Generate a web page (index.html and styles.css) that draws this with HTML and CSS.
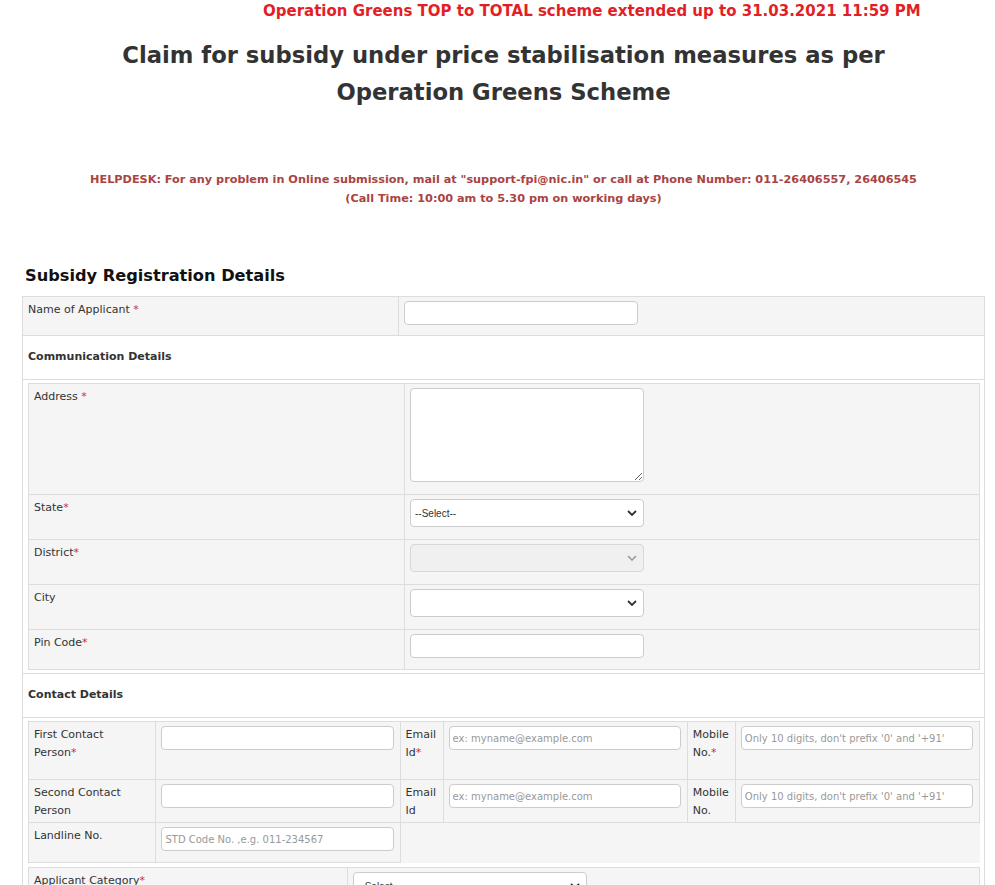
FILE: index.html
```html
<!DOCTYPE html>
<html>
<head>
<meta charset="utf-8">
<title>Claim for subsidy</title>
<link rel="stylesheet" href="styles.css">
</head>
<body>
<div class="page">
  <div class="notice">Operation Greens TOP to TOTAL scheme extended up to 31.03.2021 11:59 PM</div>
  <h1 class="title">Claim for subsidy under price stabilisation measures as per<br>Operation Greens Scheme</h1>
  <p class="helpdesk">HELPDESK: For any problem in Online submission, mail at "support-fpi@nic.in" or call at Phone Number: 011-26406557, 26406545<br>(Call Time: 10:00 am to 5.30 pm on working days)</p>
  <h2 class="section-title">Subsidy Registration Details</h2>
  <table class="outer">
    <tr class="grey">
      <td class="lbl outer-lbl">Name of Applicant <span class="req">*</span></td>
      <td class="fld"><input class="inp first" type="text"></td>
    </tr>
    <tr>
      <td colspan="2" class="subhead">Communication Details</td>
    </tr>
    <tr>
      <td colspan="2" class="nest">
        <table class="inner">
          <tr>
            <td class="lbl inner-lbl">Address <span class="req">*</span></td>
            <td class="fld"><textarea class="txt"></textarea></td>
          </tr>
          <tr>
            <td class="lbl">State<span class="req">*</span></td>
            <td class="fld">
              <span class="sel-wrap">
                <select class="sel"><option>--Select--</option></select>
                <svg class="chev" width="10" height="6" viewBox="0 0 10 6"><polyline points="1,1 5,5 9,1" fill="none" stroke="#333333" stroke-width="1.8"/></svg>
              </span>
            </td>
          </tr>
          <tr>
            <td class="lbl">District<span class="req">*</span></td>
            <td class="fld">
              <span class="sel-wrap">
                <select class="sel" disabled><option></option></select>
                <svg class="chev" width="10" height="6" viewBox="0 0 10 6"><polyline points="1,1 5,5 9,1" fill="none" stroke="#9a9a9a" stroke-width="1.6"/></svg>
              </span>
            </td>
          </tr>
          <tr>
            <td class="lbl">City</td>
            <td class="fld">
              <span class="sel-wrap">
                <select class="sel"><option></option></select>
                <svg class="chev" width="10" height="6" viewBox="0 0 10 6"><polyline points="1,1 5,5 9,1" fill="none" stroke="#333333" stroke-width="1.8"/></svg>
              </span>
            </td>
          </tr>
          <tr>
            <td class="lbl">Pin Code<span class="req">*</span></td>
            <td class="fld"><input class="inp" type="text"></td>
          </tr>
        </table>
      </td>
    </tr>
    <tr>
      <td colspan="2" class="subhead">Contact Details</td>
    </tr>
    <tr>
      <td colspan="2" class="nest">
        <table class="inner contact">
          <tr class="tall">
            <td class="lbl c1">First Contact Person<span class="req">*</span></td>
            <td class="fld c2"><input class="inp wide" type="text"></td>
            <td class="lbl c3">Email Id<span class="req">*</span></td>
            <td class="fld c4"><input class="inp wide" type="text" placeholder="ex: myname@example.com"></td>
            <td class="lbl c5">Mobile No.<span class="req">*</span></td>
            <td class="fld c6"><input class="inp wide" type="text" placeholder="Only 10 digits, don't prefix '0' and '+91'"></td>
          </tr>
          <tr class="mid">
            <td class="lbl">Second Contact Person</td>
            <td class="fld"><input class="inp wide" type="text"></td>
            <td class="lbl">Email Id</td>
            <td class="fld"><input class="inp wide" type="text" placeholder="ex: myname@example.com"></td>
            <td class="lbl">Mobile No.</td>
            <td class="fld"><input class="inp wide" type="text" placeholder="Only 10 digits, don't prefix '0' and '+91'"></td>
          </tr>
          <tr>
            <td class="lbl">Landline No.</td>
            <td class="fld"><input class="inp wide" type="text" placeholder="STD Code No. ,e.g. 011-234567"></td>
            <td colspan="4" class="blank"></td>
          </tr>
        </table>
        <table class="inner cat">
          <tr>
            <td class="lbl cat-lbl">Applicant Category<span class="req">*</span></td>
            <td class="fld">
              <span class="sel-wrap">
                <select class="sel"><option>--Select--</option></select>
                <svg class="chev" width="10" height="6" viewBox="0 0 10 6"><polyline points="1,1 5,5 9,1" fill="none" stroke="#333333" stroke-width="1.8"/></svg>
              </span>
            </td>
          </tr>
        </table>
      </td>
    </tr>
  </table>
</div>
</body>
</html>
```
FILE: styles.css
```css
html, body {
  margin: 0;
  padding: 0;
  background: #ffffff;
}
body {
  font-family: "DejaVu Sans", Verdana, sans-serif;
  color: #333333;
}
.page {
  margin: 0 10px 0 22px;
}
.notice {
  padding: 1px 0 0 241px;
  font-size: 15px;
  font-weight: bold;
  color: #e21f26;
  line-height: 20px;
  white-space: nowrap;
}
.title {
  margin: 16px 0 0;
  text-align: center;
  font-size: 22.7px;
  line-height: 37px;
  font-weight: bold;
  color: #333333;
}
.helpdesk {
  margin: 59px 0 0;
  text-align: center;
  font-size: 11.25px;
  line-height: 19px;
  font-weight: bold;
  color: #a94442;
}
.section-title {
  margin: 56px 0 0 3px;
  font-size: 16.2px;
  line-height: 24px;
  font-weight: bold;
  color: #111111;
}
table {
  border-collapse: collapse;
  border-spacing: 0;
}
.outer {
  width: 963px;
  margin-top: 8px;
  border: 1px solid #dddddd;
}
.outer > tbody > tr > td {
  border: 1px solid #dddddd;
}
.grey > td {
  background: #f5f5f5;
}
td {
  vertical-align: top;
  padding: 4px 6px 0 5px;
  font-size: 11px;
  line-height: 18px;
}
.lbl {
  color: #333333;
}
.outer-lbl {
  width: 364px;
}
.req {
  color: #c9302c;
}
.subhead {
  padding: 12px 5px 12px 5px;
  font-weight: bold;
  background: #ffffff;
  height: 19px;
}
.outer > tbody > tr > td.nest {
  padding: 3px 4px 3px 5px;
  background: #ffffff;
}
.inner {
  width: 100%;
  background: #f5f5f5;
}
.inner td {
  border: 1px solid #dddddd;
}
.inner-lbl {
  width: 364px;
}
.inp {
  display: block;
  box-sizing: border-box;
  width: 234px;
  height: 24px;
  margin: 0 0 11px;
  padding: 2px 3px;
  border: 1px solid #cccccc;
  border-radius: 4px;
  background: #ffffff;
  font-family: "DejaVu Sans", Verdana, sans-serif;
  font-size: 10px;
  color: #555555;
}
.inp.first {
  margin-bottom: 10px;
}
.inp::placeholder {
  color: #999999;
}
.txt {
  display: block;
  box-sizing: border-box;
  width: 234px;
  height: 94px;
  margin: 0 0 12px;
  border: 1px solid #cccccc;
  border-radius: 4px;
  background: #ffffff;
}
.sel-wrap {
  position: relative;
  display: block;
  width: 234px;
  margin: 0 0 12px;
}
.sel {
  display: block;
  box-sizing: border-box;
  width: 234px;
  height: 28px;
  margin: 0;
  padding: 0 4px;
  border: 1px solid #cccccc;
  border-radius: 4px;
  background: #ffffff;
  font-family: "Liberation Sans", Arial, sans-serif;
  font-size: 10px;
  color: #333333;
  -webkit-appearance: none;
  appearance: none;
}
.sel:disabled {
  background: #eeeeee;
}
.chev {
  position: absolute;
  right: 7px;
  top: 11px;
  pointer-events: none;
}
.contact .wide {
  width: 100%;
}
.c1 { width: 110px; padding-right: 12px; }
.c2 { width: 234px; }
.c3 { width: 31px; }
.c4 { width: 234px; }
.c5 { width: 35px; }
.c6 { width: 234px; }
.tall > td {
  height: 53px;
}
.mid > td {
  height: 38px;
}
.contact td.blank {
  border: none;
  background: #f5f5f5;
}
.cat {
  margin-top: 4px;
}
.cat-lbl {
  width: 307px;
}
```
